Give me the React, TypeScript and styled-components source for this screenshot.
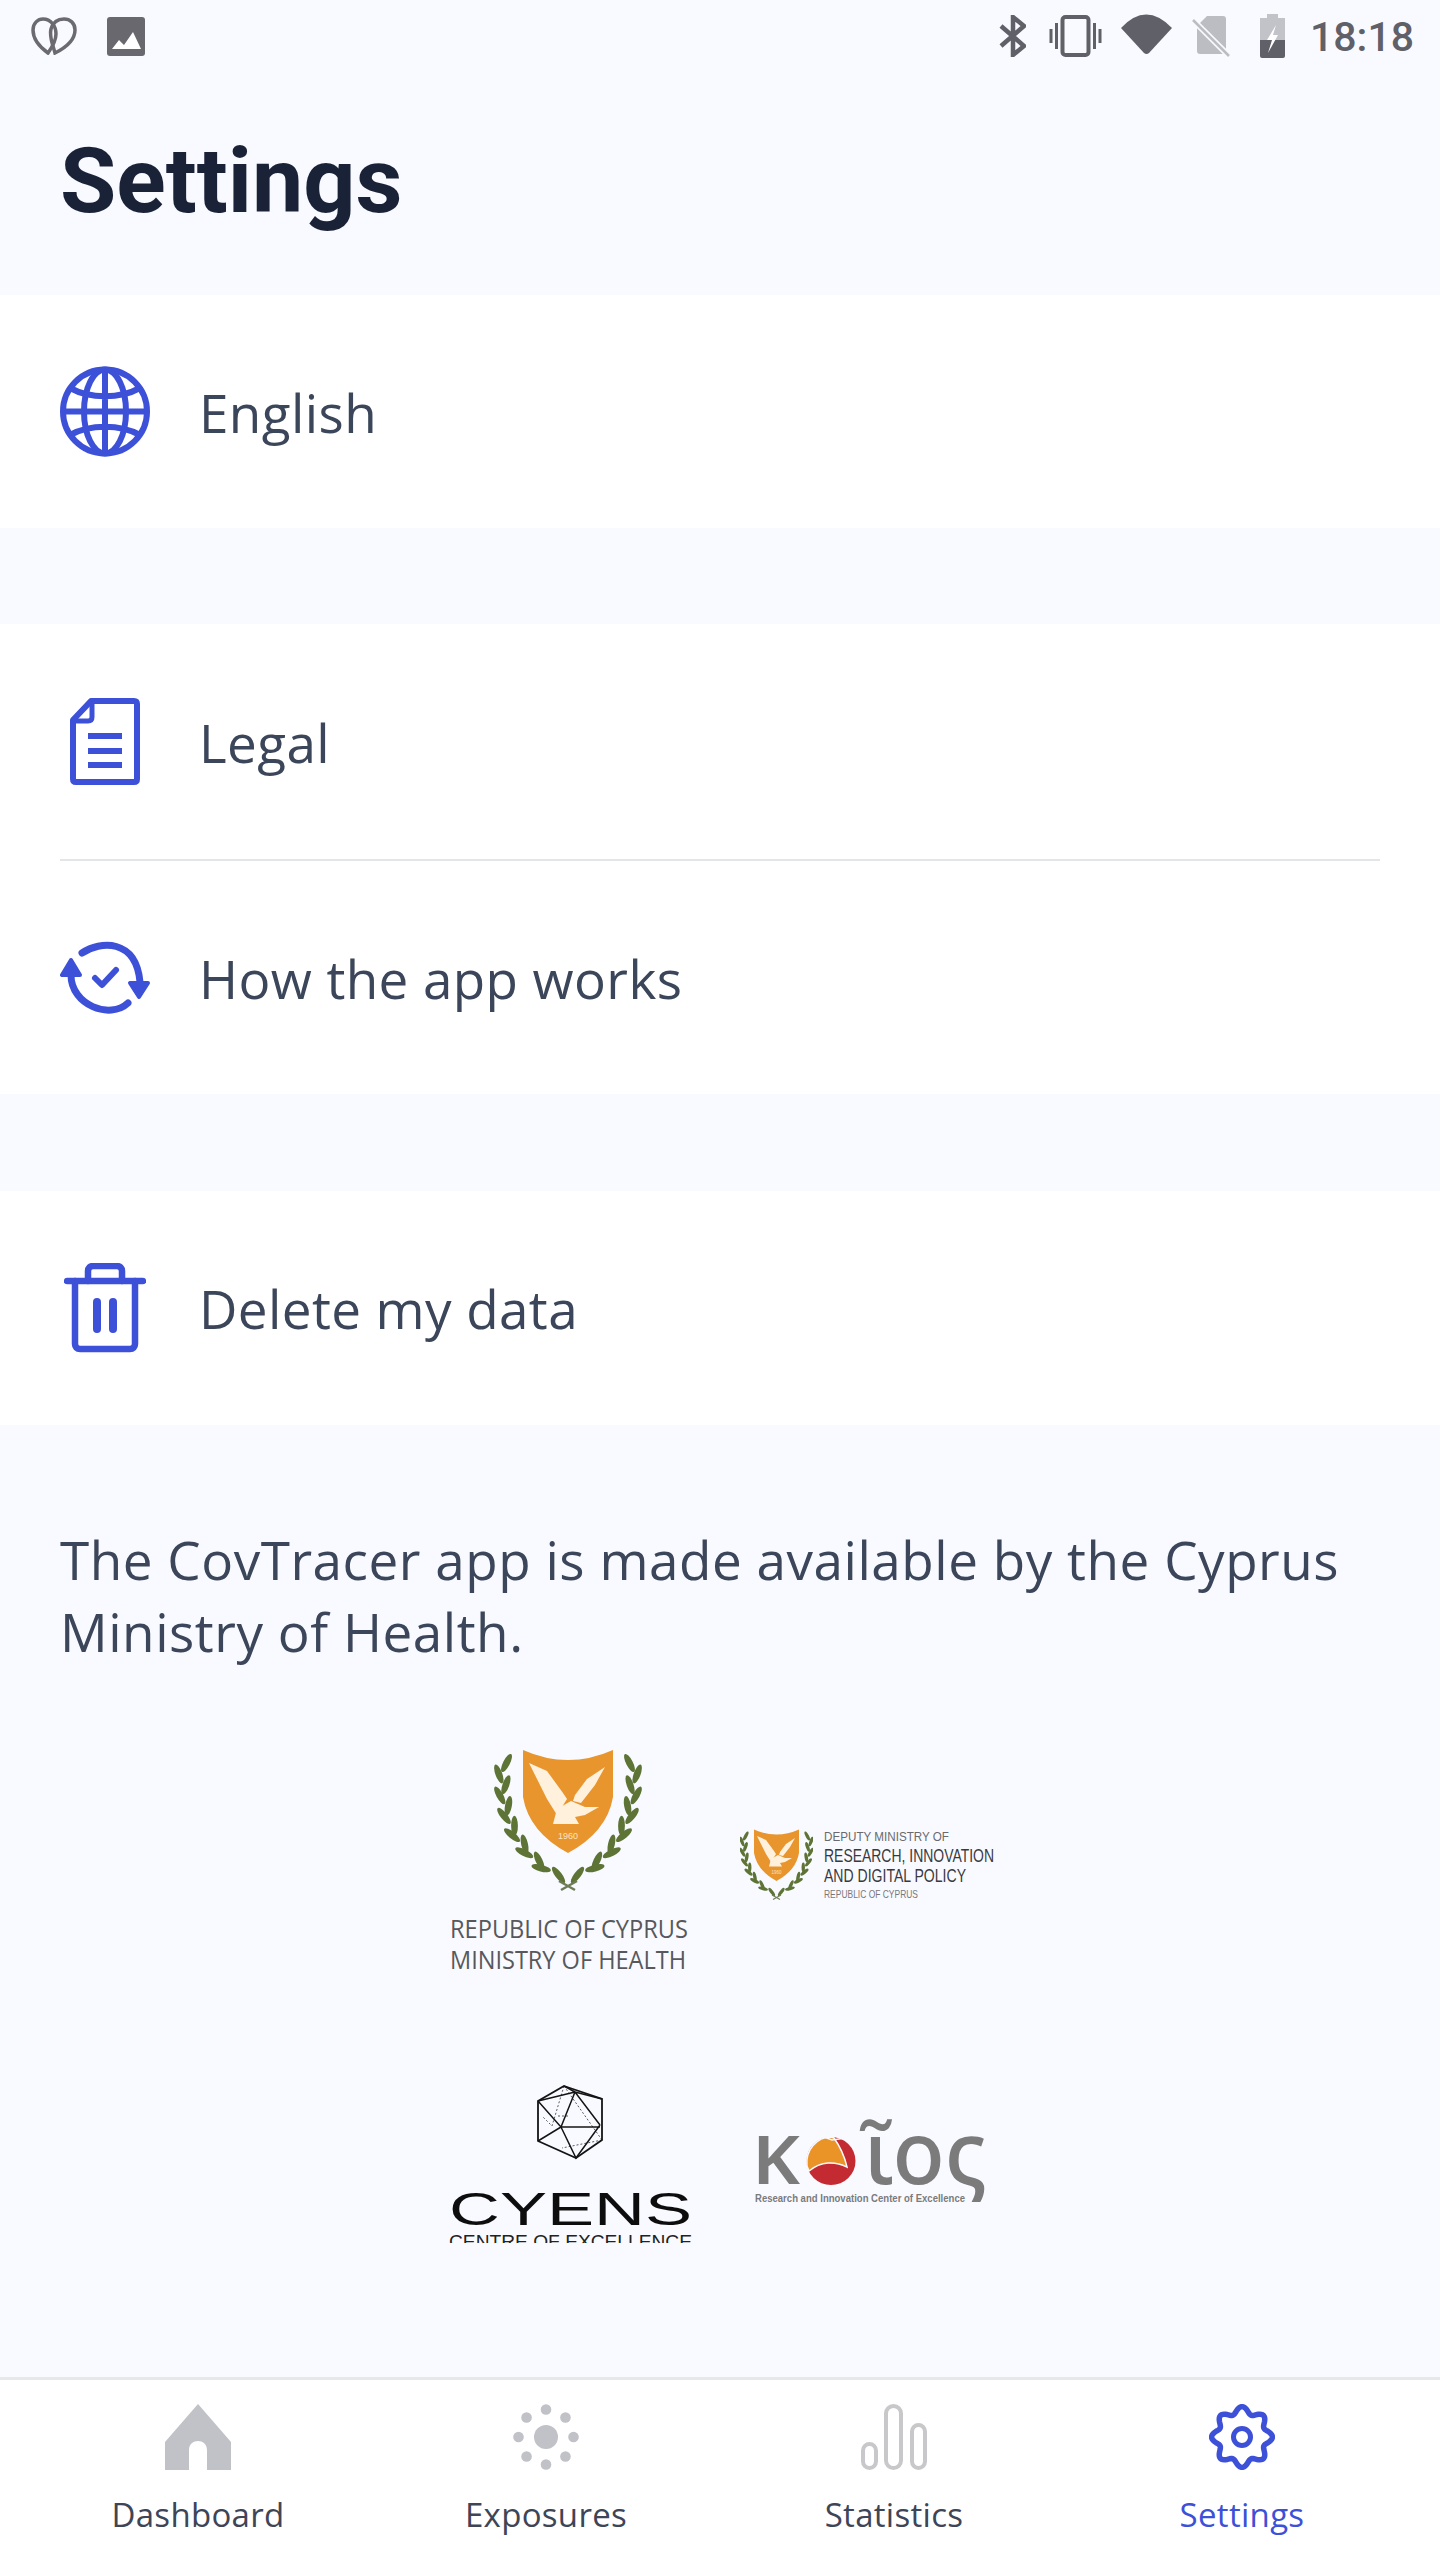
import React from "react";
import styled, { createGlobalStyle } from "styled-components";

const BLUE = "#3d50d8";
const GREY = "#c1c2c7";
const STATUS = "#5f6068";
const BODY_FONT = `"Open Sans", "Noto Sans", sans-serif`;

const Global = createGlobalStyle`
  html, body { margin: 0; padding: 0; background: #f9faff; }
  * { box-sizing: border-box; }
`;

const Page = styled.div`
  width: 1440px;
  height: 2560px;
  display: flex;
  flex-direction: column;
  background: #f9faff;
  font-family: ${BODY_FONT};
  overflow: hidden;
`;

const Header = styled.header`
  height: 295px;
  flex: none;
`;

const StatusBar = styled.div`
  height: 72px;
  padding: 14px 26px 0 31px;
  display: flex;
  align-items: flex-start;
  justify-content: space-between;
`;

const StatusGroup = styled.div`
  display: flex;
  align-items: flex-start;
`;

const StatusIcon = styled.svg<{ $ml?: number; $mt?: number }>`
  display: block;
  flex: none;
  margin-left: ${(p) => p.$ml ?? 0}px;
  margin-top: ${(p) => p.$mt ?? 0}px;
`;

const Clock = styled.span`
  font-family: Roboto, sans-serif;
  font-weight: 500;
  font-size: 41px;
  line-height: 46px;
  color: ${STATUS};
  margin-left: 25px;
`;

const Title = styled.h1`
  margin: 0;
  padding: 51px 0 0 60px;
  font-family: Roboto, sans-serif;
  font-weight: 700;
  font-size: 91.5px;
  line-height: 116px;
  color: #1a2238;
`;

const Section = styled.section`
  background: #fff;
  flex: none;
`;

const Spacer = styled.div<{ $h: number }>`
  height: ${(p) => p.$h}px;
  flex: none;
`;

const Row = styled.div<{ $h: number }>`
  height: ${(p) => p.$h}px;
  padding-left: 60px;
  display: flex;
  align-items: center;
`;

const IconSlot = styled.div`
  width: 90px;
  flex: none;
  display: flex;
  justify-content: center;
  margin-right: 49px;
`;

const RowLabel = styled.span`
  font-size: 53px;
  line-height: 72px;
  color: #3b465a;
  letter-spacing: 0.4px;
  position: relative;
  top: 1px;
`;

const Divider = styled.div`
  height: 2px;
  margin: 0 60px;
  background: #e4e5e7;
`;

const Footer = styled.div`
  flex: 1;
  padding: 99px 60px 0;
`;

const About = styled.p`
  margin: 0;
  font-size: 53px;
  line-height: 72px;
  color: #3b465a;
  letter-spacing: 0.53px;
`;

const LogoGrid = styled.div`
  margin: 77px -60px 0;
  padding-left: 6px;
  display: grid;
  grid-template-columns: 244px 260px;
  justify-content: center;
  column-gap: 46px;
  row-gap: 105px;
`;

const LogoSvg = styled.svg<{ $clip?: boolean }>`
  display: block;
  overflow: ${(p) => (p.$clip ? "hidden" : "visible")};
`;

const Nav = styled.nav`
  height: 183px;
  flex: none;
  padding: 24px 24px 0;
  background: #fff;
  border-top: 3px solid #e6e8ea;
  display: grid;
  grid-template-columns: repeat(4, 1fr);
`;

const NavItem = styled.div<{ $active?: boolean }>`
  display: flex;
  flex-direction: column;
  align-items: center;
  color: ${(p) => (p.$active ? BLUE : "#3e4557")};
`;

const NavLabel = styled.span`
  margin-top: 22px;
  font-size: 33px;
  line-height: 46px;
  letter-spacing: 0.3px;
`;

const Globe = () => (
  <svg width="90" height="91" viewBox="0 0 90 91" fill="none" stroke={BLUE} strokeWidth="6">
    <circle cx="45" cy="45.5" r="42" />
    <ellipse cx="45" cy="45.5" rx="21" ry="42" />
    <path d="M45 3v85M3 45.500h84M10 22c20 11 50 11 70 0M10 69c20-11 50-11 70 0" />
  </svg>
);

const Doc = () => (
  <svg width="70" height="87" viewBox="0 0 70 87" fill="none" stroke={BLUE} strokeWidth="6" strokeLinejoin="round">
    <path d="M21 3H64Q67 3 67 6V81Q67 84 64 84H6Q3 84 3 81V22z" />
    <path d="M22 3V19Q22 23 18 23H3" strokeWidth="5" />
    <path d="M18 38H52M18 53H52M18 67H52" />
  </svg>
);

const Sync = () => (
  <svg width="90" height="76" viewBox="0 0 90 76" fill="none" stroke={BLUE} strokeWidth="7" strokeLinecap="round" strokeLinejoin="round">
    <path d="M22 13C40 1 76-2 80 42" />
    <path d="M11 35C11 65 50 80 68 63" />
    <path d="M2 35H20L11 20z" fill={BLUE} strokeWidth="4" />
    <path d="M70 43H88L79 57z" fill={BLUE} strokeWidth="4" />
    <path d="M35 38L42 45 56 30" strokeWidth="6" />
  </svg>
);

const Trash = () => (
  <svg width="82" height="90" viewBox="0 0 82 90" fill="none" stroke={BLUE} strokeWidth="6.500" strokeLinecap="round" strokeLinejoin="round">
    <path d="M3 18H79" />
    <path d="M11 18V81c0 3 2 5 5 5H66c3 0 5-2 5-5V18" />
    <path d="M24 18V8c0-3 2-5 5-5H53c3 0 5 2 5 5V18" />
    <path d="M33 39V66M49 39V66" strokeWidth="8" />
  </svg>
);

const leaves = (() => {
  const out: { x: number; y: number; a: number }[] = [];
  const n = 13;
  for (let i = 0; i < n; i++) {
    const t = i / (n - 1);
    const u = 1 - t;
    const x = u * u * u * 60 + 3 * u * u * t * 16 + 3 * u * t * t * 4 + t * t * t * 8;
    const y = u * u * u * 118 + 3 * u * u * t * 92 + 3 * u * t * t * 50 + t * t * t * 6;
    const dx = 3 * u * u * (16 - 60) + 6 * u * t * (4 - 16) + 3 * t * t * (8 - 4);
    const dy = 3 * u * u * (92 - 118) + 6 * u * t * (50 - 92) + 3 * t * t * (6 - 50);
    const tangent = (Math.atan2(dy, dx) * 180) / Math.PI + 90;
    const side = i % 2 === 0 ? 1 : -1;
    out.push({ x: x + side * 3.5, y, a: tangent + side * 22 });
  }
  return out;
})();

const Crest = () => (
  <>
    {leaves.map((l, i) => (
      <g key={i}>
        <ellipse cx={l.x} cy={l.y} rx="3.4" ry="10" fill="#5d7436" transform={`rotate(${l.a} ${l.x} ${l.y})`} />
        <ellipse cx={146 - l.x} cy={l.y} rx="3.4" ry="10" fill="#5d7436" transform={`rotate(${-l.a} ${146 - l.x} ${l.y})`} />
      </g>
    ))}
    <path d="M66 133l16-9M80 133l-16-9" stroke="#6f7d57" strokeWidth="2.500" fill="none" />
    <path d="M28-7Q73 13 118-7V40Q112 75 73 96 34 75 28 40z" fill="#e8952e" />
    <path d="M34 6l18 8 16 22 4 6-10 16-10-16zM110 10L92 22 80 38l-2 6 8 2 14-18z" fill="#fff1dc" />
    <path d="M58 67l4-15 14-8 14 6 14 0-14 8-10 2 4 7z" fill="#fff1dc" />
    <text x="73" y="82" textAnchor="middle" fontFamily="Liberation Sans, sans-serif" fontSize="9" fill="#fbe3bd">1960</text>
  </>
);

const MinistryLogo = () => (
  <LogoSvg width="244" height="230" viewBox="0 0 244 230">
    <svg x="47" y="4" width="146" height="146" viewBox="0 -8 146 146" overflow="visible">
      <Crest />
    </svg>
    <g fontFamily="Open Sans, sans-serif" fontSize="26" fill="#57585c">
      <text x="2" y="193" textLength="238" lengthAdjust="spacingAndGlyphs">REPUBLIC OF CYPRUS</text>
      <text x="2" y="224" textLength="236" lengthAdjust="spacingAndGlyphs">MINISTRY OF HEALTH</text>
    </g>
  </LogoSvg>
);

const DeputyLogo = () => (
  <LogoSvg width="260" height="230" viewBox="0 0 260 230">
    <svg x="2" y="84" width="73" height="73" viewBox="0 -8 146 146">
      <Crest />
    </svg>
    <g fontFamily="Liberation Sans, sans-serif">
      <text x="86" y="96" fontSize="13" fill="#6a6a6e" textLength="125" lengthAdjust="spacingAndGlyphs">DEPUTY MINISTRY OF</text>
      <text x="86" y="117" fontSize="17.5" fill="#3a3a3e" textLength="170" lengthAdjust="spacingAndGlyphs">RESEARCH, INNOVATION</text>
      <text x="86" y="137" fontSize="17.5" fill="#3a3a3e" textLength="142" lengthAdjust="spacingAndGlyphs">AND DIGITAL POLICY</text>
      <text x="86" y="153" fontSize="11" fill="#77777b" textLength="94" lengthAdjust="spacingAndGlyphs">REPUBLIC OF CYPRUS</text>
    </g>
  </LogoSvg>
);

const CyensLogo = () => (
  <LogoSvg $clip width="244" height="163" viewBox="0 0 244 163">
    <g transform="translate(90 6)" fill="none" stroke="#141414">
      <path d="M26 0L64 13V54L38 72 0 55V15z" strokeWidth="1.800" />
      <path d="M0 15L23 41 0 55M23 41L37 6 62 39M23 41H62M23 41L38 72 62 39M37 6L0 15M37 6L64 13M26 0l11 6" strokeWidth="1.500" />
      <path d="M26 0L14 40 4 30M64 54L24 62M20 30h10M26 0l38 54" strokeWidth="0.700" strokeDasharray="2 2" />
    </g>
    <text x="1" y="145" fontFamily="Liberation Sans, sans-serif" fontSize="46" fill="#0d0d0d" textLength="243" lengthAdjust="spacingAndGlyphs">CYENS</text>
    <text x="1" y="168" fontFamily="Liberation Sans, sans-serif" fontSize="19" fill="#222" textLength="243" lengthAdjust="spacingAndGlyphs">CENTRE OF EXCELLENCE</text>
  </LogoSvg>
);

const KoiosLogo = () => (
  <LogoSvg width="260" height="163" viewBox="0 0 260 163">
    <g fontFamily="Noto Sans, sans-serif" fill="#7b7b7b" fontWeight="600">
      <text x="14" y="104" fontSize="66" textLength="48" lengthAdjust="spacingAndGlyphs">K</text>
      <text x="126" y="104" fontSize="88" fontWeight="500" textLength="123" lengthAdjust="spacingAndGlyphs">ῖος</text>
    </g>
    <ellipse cx="93" cy="81" rx="24.500" ry="24" fill="#c32a32" />
    <path d="M69 86c-2-16 10-29 24-29l3 1c5 7 10 16 13 29-12-6-26-6-38 4z" fill="#ea9326" stroke="#f9faff" strokeWidth="1.500" />
    <path d="M86 57l8 3 14-2" stroke="#f9faff" strokeWidth="1.500" fill="none" />
    <text x="17" y="122" fontFamily="Liberation Sans, sans-serif" fontWeight="700" fontSize="10.5" fill="#7b7b7b" textLength="210" lengthAdjust="spacingAndGlyphs">Research and Innovation Center of Excellence</text>
  </LogoSvg>
);

const gearPath = () => {
  const pts: string[] = [];
  for (let i = 0; i <= 160; i++) {
    const a = (i / 160) * Math.PI * 2 - Math.PI / 2;
    const r = 27 + 3.4 * Math.cos(8 * (a + Math.PI / 2));
    pts.push(`${(33 + r * Math.cos(a)).toFixed(2)} ${(33 + r * Math.sin(a)).toFixed(2)}`);
  }
  return `M${pts.join("L")}Z`;
};

const HomeIcon = () => (
  <svg width="66" height="66" viewBox="0 0 66 66">
    <path fillRule="evenodd" fill={GREY} d="M33 0L66 38V66H0V38zM24 66H42V46c0-12-18-12-18 0z" />
  </svg>
);

const dots = Array.from({ length: 8 }, (_, i) => (i * Math.PI) / 4);
const ExposureIcon = () => (
  <svg width="66" height="66" viewBox="0 0 66 66" fill={GREY}>
    <circle cx="33" cy="33" r="12" />
    {dots.map((a, i) => (
      <circle key={i} cx={33 + 27.5 * Math.cos(a)} cy={33 + 27.5 * Math.sin(a)} r="5.3" />
    ))}
  </svg>
);

const StatsIcon = () => (
  <svg width="66" height="66" viewBox="0 0 66 66" fill="none" stroke="#c8c8ca" strokeWidth="4">
    <rect x="2" y="40" width="13" height="24" rx="6.5" />
    <rect x="25" y="2" width="15" height="62" rx="7.5" />
    <rect x="51" y="21" width="13" height="43" rx="6.5" />
  </svg>
);

const GearIcon = () => (
  <svg width="66" height="66" viewBox="0 0 66 66" fill="none" stroke={BLUE} strokeWidth="5.5">
    <path d={gearPath()} />
    <circle cx="33" cy="33" r="8.5" strokeWidth="5" />
  </svg>
);

export default function App() {
  return (
    <Page>
      <Global />
      <Header>
        <StatusBar>
          <StatusGroup>
            <StatusIcon width="46" height="38" viewBox="0 0 46 38" $mt={3} fill="none" stroke="#6a6a70" strokeWidth="3.5">
              <path d="M17 36C6 28 2 20 2 13 2 6 7 2 12 2c8 0 13 7 13 15 0 6-3 12-8 19z" />
              <path d="M24 36C22 28 18 20 20 12 22 5 27 2 33 2c6 0 11 4 11 11 0 8-6 16-20 23z" />
            </StatusIcon>
            <StatusIcon width="38" height="39" viewBox="0 0 38 39" $ml={30} $mt={3}>
              <rect width="38" height="39" rx="3" fill="#68686e" />
              <path d="M5 32l7-9 5 5 9-13 8 17z" fill="#fff" />
            </StatusIcon>
          </StatusGroup>
          <StatusGroup>
            <StatusIcon width="27" height="42" viewBox="0 0 27 42" $mt={1} fill="none" stroke={STATUS} strokeWidth="4.5">
              <path d="M2 11L25 31 14 40V2l11 9L2 31" />
            </StatusIcon>
            <StatusIcon width="53" height="42" viewBox="0 0 53 42" $ml={23} $mt={1} fill="none" stroke={STATUS}>
              <rect x="13.5" y="2" width="26" height="38" rx="3" strokeWidth="4" />
              <path d="M2 14v14M7.5 8v26M45.5 8v26M51 14v14" strokeWidth="3" />
            </StatusIcon>
            <StatusIcon width="51" height="41" viewBox="0 0 51 41" $ml={19}>
              <path d="M0 14Q25-13 51 14L28 39q-2.500 2-5 0z" fill={STATUS} />
            </StatusIcon>
            <StatusIcon width="38" height="41" viewBox="0 0 38 41" $ml={20} $mt={2}>
              <path d="M15 0H31q3 0 3 3V38H8q-3 0-3-3V10z" fill="#bcbdc3" />
              <path d="M0 3L38 41" stroke="#f9faff" strokeWidth="6" />
              <path d="M1 4L37 40" stroke="#bcbdc3" strokeWidth="2.500" />
            </StatusIcon>
            <StatusIcon width="25" height="44" viewBox="0 0 25 44" $ml={30}>
              <path d="M7 0h11v4h7v22H0V4h7z" fill="#c2c3c8" />
              <path d="M0 26h25v16q0 2-2 2H2q-2 0-2-2z" fill={STATUS} />
              <path d="M16 11L7 26h5l-4 13 10-18h-5z" fill="#fff" />
            </StatusIcon>
            <Clock>18:18</Clock>
          </StatusGroup>
        </StatusBar>
        <Title>Settings</Title>
      </Header>

      <Section>
        <Row $h={233}>
          <IconSlot><Globe /></IconSlot>
          <RowLabel>English</RowLabel>
        </Row>
      </Section>
      <Spacer $h={96} />
      <Section>
        <Row $h={235}>
          <IconSlot><Doc /></IconSlot>
          <RowLabel>Legal</RowLabel>
        </Row>
        <Divider />
        <Row $h={233}>
          <IconSlot><Sync /></IconSlot>
          <RowLabel>How the app works</RowLabel>
        </Row>
      </Section>
      <Spacer $h={97} />
      <Section>
        <Row $h={234}>
          <IconSlot><Trash /></IconSlot>
          <RowLabel>Delete my data</RowLabel>
        </Row>
      </Section>

      <Footer>
        <About>The CovTracer app is made available by the Cyprus Ministry of Health.</About>
        <LogoGrid>
          <MinistryLogo />
          <DeputyLogo />
          <CyensLogo />
          <KoiosLogo />
        </LogoGrid>
      </Footer>

      <Nav>
        <NavItem><HomeIcon /><NavLabel>Dashboard</NavLabel></NavItem>
        <NavItem><ExposureIcon /><NavLabel>Exposures</NavLabel></NavItem>
        <NavItem><StatsIcon /><NavLabel>Statistics</NavLabel></NavItem>
        <NavItem $active><GearIcon /><NavLabel>Settings</NavLabel></NavItem>
      </Nav>
    </Page>
  );
}
